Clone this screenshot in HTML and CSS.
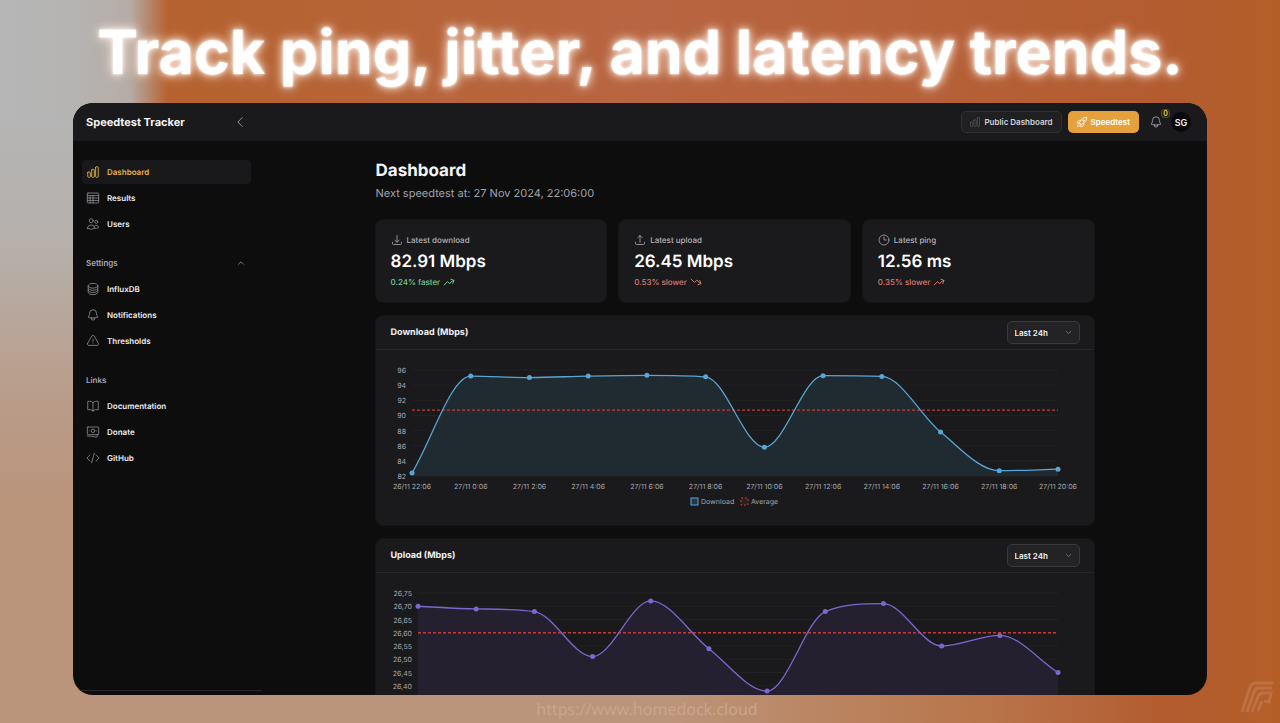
FILE: index.html
```html
<!DOCTYPE html>
<html lang="en">
<head>
<meta charset="utf-8">
<meta name="viewport" content="width=device-width, initial-scale=1">
<title>Speedtest Tracker</title>
<link rel="stylesheet" href="styles.css">
</head>
<body>
<svg class="sprite" aria-hidden="true">
  <symbol id="i-chart" viewBox="0 0 24 24"><path d="M3 13.1c0-.6.5-1.1 1.1-1.1h2.3c.6 0 1.1.5 1.1 1.1v6.8c0 .6-.5 1.1-1.1 1.1H4.100c-.6 0-1.100-.5-1.100-1.100v-6.800ZM9.750 8.600c0-.6.5-1.100 1.100-1.100h2.300c.6 0 1.100.5 1.100 1.100v11.300c0 .6-.5 1.100-1.100 1.100h-2.300c-.6 0-1.100-.5-1.100-1.100V8.600ZM16.500 4.100c0-.6.5-1.100 1.100-1.100h2.300c.6 0 1.100.5 1.100 1.100v15.800c0 .6-.5 1.100-1.100 1.100h-2.300c-.6 0-1.100-.5-1.100-1.100V4.100Z"/></symbol>
  <symbol id="i-table" viewBox="0 0 24 24"><rect x="2.200" y="3.500" width="19.600" height="17" rx="1.200"/><path d="M2.200 7.800h19.600M2.200 12h19.600M2.200 16.200h19.600M12 7.800v12.700M7 7.800v12.700"/></symbol>
  <symbol id="i-users" viewBox="0 0 24 24"><circle cx="9" cy="6.400" r="3.400"/><circle cx="17.600" cy="8.300" r="2.600"/><path d="M2.300 19.200a6.400 6.400 0 0 1 12.700 0v.1a12.300 12.300 0 0 1-12.700 0ZM15 19.300a9.300 9.300 0 0 0 6.600-.8 4.100 4.100 0 0 0-7.500-2.500"/></symbol>
  <symbol id="i-db" viewBox="0 0 24 24"><path d="M20.250 6.400c0 2.300-3.700 4.100-8.250 4.100S3.750 8.700 3.750 6.400m16.500 0c0-2.300-3.700-4.150-8.250-4.150S3.750 4.100 3.750 6.400m16.500 0v11.200c0 2.300-3.700 4.150-8.250 4.150s-8.250-1.850-8.250-4.150V6.400m16.500 3.750c0 2.300-3.700 4.100-8.250 4.100s-8.250-1.850-8.250-4.100m16.500 3.750c0 2.300-3.700 4.100-8.250 4.100s-8.250-1.850-8.250-4.100"/></symbol>
  <symbol id="i-bell" viewBox="0 0 24 24"><path d="M14.900 17.100a24 24 0 0 0 5.400-1.300A9 9 0 0 1 18 9.750V9A6 6 0 0 0 6 9v.75a9 9 0 0 1-2.300 6c1.700.6 3.500 1.100 5.400 1.300m5.800 0a24 24 0 0 1-5.800 0m5.800 0a3 3 0 1 1-5.800 0"/></symbol>
  <symbol id="i-warn" viewBox="0 0 24 24"><path d="M12 9v3.750M2.700 16.100c-.9 1.500.2 3.400 1.900 3.400h14.800c1.700 0 2.800-1.900 1.900-3.400L13.900 3.400c-.8-1.500-3-1.500-3.900 0L2.700 16.100ZM12 15.700v.1"/></symbol>
  <symbol id="i-book" viewBox="0 0 24 24"><path d="M12 6a9 9 0 0 0-6-2.200c-1.100 0-2.100.2-3 .5V18.500a9 9 0 0 1 9 1.800M12 6a9 9 0 0 1 6-2.200c1.100 0 2.100.2 3 .5V18.500a9 9 0 0 0-9 1.800M12 6v14.300"/></symbol>
  <symbol id="i-cash" viewBox="0 0 24 24"><rect x="2.250" y="3.500" width="19.500" height="13" rx="1"/><circle cx="12" cy="10" r="3"/><path d="M5.500 10h.1M18.400 10h.1M2.250 18.800c5.400 0 10.600.7 15.500 2 .8.200 1.500-.3 1.500-1.100V16.500"/></symbol>
  <symbol id="i-code" viewBox="0 0 24 24"><path d="M17.250 6.750 22.500 12l-5.250 5.250m-10.500 0L1.500 12l5.250-5.250m7.500-3-4.500 16.500"/></symbol>
  <symbol id="i-rocket" viewBox="0 0 24 24"><path d="M15.600 14.400a6 6 0 0 1-5.800 7.400v-4.800m5.800-2.600a15 15 0 0 0 6.100-12.100A15 15 0 0 0 9.600 8.400m6 6a15 15 0 0 1-5.800 2.600M9.600 8.400a6 6 0 0 0-7.400 5.800H7m2.600-5.800A15 15 0 0 0 7 14.200m2.800 2.800L7 14.200M4.800 16.600a4.500 4.500 0 0 0-1.700 4.300 4.500 4.500 0 0 0 4.300-1.700"/><circle cx="15" cy="9" r="1.500"/></symbol>
  <symbol id="i-down" viewBox="0 0 24 24"><path d="M3 16.500v2.250A2.250 2.250 0 0 0 5.250 21h13.500A2.250 2.250 0 0 0 21 18.750V16.500M16.500 12 12 16.500 7.500 12M12 16.500V3"/></symbol>
  <symbol id="i-up" viewBox="0 0 24 24"><path d="M3 16.500v2.250A2.250 2.250 0 0 0 5.250 21h13.500A2.250 2.250 0 0 0 21 18.750V16.500M7.500 7.500 12 3l4.500 4.500M12 3v13.500"/></symbol>
  <symbol id="i-clock" viewBox="0 0 24 24"><circle cx="12" cy="12" r="10"/><path d="M12 6v6h4.500"/></symbol>
  <symbol id="i-trend-up" viewBox="0 0 24 24"><path d="M2.250 18 9 11.250l4.300 4.300a12 12 0 0 1 5.800-5.500l2.750-1.250m-6-2.300 6 2.300-2.300 6"/></symbol>
  <symbol id="i-trend-down" viewBox="0 0 24 24"><path d="M2.250 6 9 12.750l4.300-4.300a12 12 0 0 1 5.800 5.500l2.750 1.250m-6 2.300 6-2.300-2.300-6"/></symbol>
  <symbol id="i-left" viewBox="0 0 24 24"><path d="M15.750 19.500 8.250 12l7.500-7.500"/></symbol>
  <symbol id="i-chev-up" viewBox="0 0 24 24"><path d="m4.500 15.750 7.500-7.500 7.500 7.500"/></symbol>
  <symbol id="i-chev-down" viewBox="0 0 24 24"><path d="m4.500 8.250 7.500 7.500 7.500-7.500"/></symbol>
</svg>

<div class="page">
  <h1 class="headline">Track ping, jitter, and latency trends.</h1>

  <div class="app">
    <header class="topbar">
      <span class="brand">Speedtest Tracker</span>
      <button class="plain collapse" type="button" aria-label="Collapse sidebar"><svg class="icon"><use href="#i-left"/></svg></button>
      <div class="actions">
        <button class="btn btn-dark" type="button"><svg class="icon"><use href="#i-chart"/></svg>Public Dashboard</button>
        <button class="btn btn-amber" type="button"><svg class="icon"><use href="#i-rocket"/></svg>Speedtest</button>
        <button class="plain alerts" type="button" aria-label="Notifications"><svg class="icon"><use href="#i-bell"/></svg><span class="badge">0</span></button>
        <button class="avatar" type="button">SG</button>
      </div>
    </header>

    <div class="body">
      <nav class="sidebar">
        <div class="group">
          <a class="item active" href="#"><svg class="icon"><use href="#i-chart"/></svg>Dashboard</a>
          <a class="item" href="#"><svg class="icon"><use href="#i-table"/></svg>Results</a>
          <a class="item" href="#"><svg class="icon"><use href="#i-users"/></svg>Users</a>
        </div>
        <div class="group">
          <button class="plain group-title" type="button">Settings<svg class="icon"><use href="#i-chev-up"/></svg></button>
          <a class="item" href="#"><svg class="icon"><use href="#i-db"/></svg>InfluxDB</a>
          <a class="item" href="#"><svg class="icon"><use href="#i-bell"/></svg>Notifications</a>
          <a class="item" href="#"><svg class="icon"><use href="#i-warn"/></svg>Thresholds</a>
        </div>
        <div class="group">
          <div class="group-title">Links</div>
          <a class="item" href="#"><svg class="icon"><use href="#i-book"/></svg>Documentation</a>
          <a class="item" href="#"><svg class="icon"><use href="#i-cash"/></svg>Donate</a>
          <a class="item" href="#"><svg class="icon"><use href="#i-code"/></svg>GitHub</a>
        </div>
        <hr class="side-rule">
      </nav>

      <main class="main">
        <div class="content">
          <div class="heading">
            <h2>Dashboard</h2>
            <p>Next speedtest at: 27 Nov 2024, 22:06:00</p>
          </div>

          <section class="stats">
            <article class="card stat">
              <div class="stat-label"><svg class="icon"><use href="#i-down"/></svg>Latest download</div>
              <div class="stat-value">82.91 Mbps</div>
              <div class="trend good">0.24% faster<svg class="icon"><use href="#i-trend-up"/></svg></div>
            </article>
            <article class="card stat">
              <div class="stat-label"><svg class="icon"><use href="#i-up"/></svg>Latest upload</div>
              <div class="stat-value">26.45 Mbps</div>
              <div class="trend bad">0.53% slower<svg class="icon"><use href="#i-trend-down"/></svg></div>
            </article>
            <article class="card stat">
              <div class="stat-label"><svg class="icon"><use href="#i-clock"/></svg>Latest ping</div>
              <div class="stat-value">12.56 ms</div>
              <div class="trend bad">0.35% slower<svg class="icon"><use href="#i-trend-up"/></svg></div>
            </article>
          </section>

          <section class="card">
            <div class="card-head">
              <h3>Download (Mbps)</h3>
              <div class="select"><select aria-label="Download period"><option>Last 24h</option></select><svg class="icon"><use href="#i-chev-down"/></svg></div>
            </div>
            <svg class="chart blue" id="download" viewBox="0 0 718 175" role="img" aria-label="Download speed"></svg>
          </section>

          <section class="card">
            <div class="card-head">
              <h3>Upload (Mbps)</h3>
              <div class="select"><select aria-label="Upload period"><option>Last 24h</option></select><svg class="icon"><use href="#i-chev-down"/></svg></div>
            </div>
            <svg class="chart violet" id="upload" viewBox="0 0 718 175" role="img" aria-label="Upload speed"></svg>
          </section>
        </div>
      </main>
    </div>
  </div>

  <footer class="footer">
    <a href="#">https://www.homedock.cloud</a>
    <svg class="mark" viewBox="0 0 34 32" aria-hidden="true"><path d="M2 31 10 6q2-4 6-4h17M7 31l7-20q1-4 5-4h13M12 31l6-15q1-4 5-4h8l-2 9-5-1M18 30l4-10"/></svg>
  </footer>
</div>
<script src="charts.js"></script>
</body>
</html>
```

FILE: styles.css
```css
* { box-sizing: border-box; }

body {
  margin: 0;
  font-family: Inter, "Liberation Sans", sans-serif;
  font-size: 8px;
  text-rendering: geometricPrecision;
  color: #f4f4f5;
  background:
    linear-gradient(90deg, #b5b6b6 0, #b5b4b3 74px, #b6aca6 130px, transparent 168px) 0 0 / 100% 120px no-repeat,
    linear-gradient(180deg, #b5b5b5 120px, #b6b0ac 240px, #b99c89 400px, #ba947b 500px) 0 0 / 74px 100% no-repeat,
    linear-gradient(90deg, #ba947b 0, #bb957b 52%, #b9764b 76%, transparent 90%) 0 100% / 100% 60px no-repeat,
    linear-gradient(90deg, #b5622f 12%, #b86541 50%, #b35c30 92%, #b45e27);
}

h1, h2, h3, p { margin: 0; }
button, select { font: inherit; color: inherit; }
a { color: inherit; text-decoration: none; }
.sprite { position: absolute; width: 0; height: 0; }

.icon {
  flex: none;
  width: 14px;
  height: 14px;
  fill: none;
  stroke: currentColor;
  stroke-width: 1.5;
  stroke-linecap: round;
  stroke-linejoin: round;
}

.page {
  display: flex;
  flex-direction: column;
  height: 100vh;
  padding: 0 73px;
}

.headline {
  flex: none;
  height: 103px;
  line-height: 104px;
  text-align: center;
  white-space: nowrap;
  font-size: 61px;
  font-weight: 700;
  color: #fff;
  text-shadow: 0 0 3px #fff, 0 0 8px #fff3ea, 0 0 14px rgba(255, 225, 205, .7);
}

.app {
  flex: 1;
  min-height: 0;
  display: flex;
  flex-direction: column;
  overflow: hidden;
  border-radius: 20px;
  background: #0d0d0e;
}

.topbar {
  flex: none;
  display: flex;
  align-items: center;
  height: 38px;
  padding: 0 16px 0 13px;
  background: #1a1a1c;
}
.brand { width: 147px; font-size: 11px; font-weight: 700; }
.actions { display: flex; align-items: center; margin-left: auto; }

.plain {
  display: flex;
  padding: 0;
  border: 0;
  background: none;
  color: #a1a1aa;
}

.btn {
  display: flex;
  align-items: center;
  gap: 3px;
  height: 22px;
  margin-right: 6px;
  padding: 0 8px 0 7px;
  border: 1px solid transparent;
  border-radius: 5px;
  font-weight: 600;
}
.btn .icon { width: 12px; height: 12px; }
.btn-dark { border-color: #303033; background: #202022; color: #d4d4d8; }
.btn-dark .icon { color: #56565b; }
.btn-amber { background: #e5a23c; color: #fff; }

.alerts { position: relative; margin: 0 8px 0 4px; }
.badge {
  position: absolute;
  left: 12px;
  top: -6px;
  width: 9px;
  height: 9px;
  border: 1px solid #5d4b1a;
  border-radius: 3px;
  background: #282417;
  color: #f2c93e;
  font-size: 7px;
  font-weight: 600;
  line-height: 7px;
  text-align: center;
}
.avatar {
  width: 20px;
  height: 20px;
  padding: 0;
  border: 0;
  border-radius: 50%;
  background: #09090b;
  font-size: 9px;
  font-weight: 600;
}

.body { flex: 1; min-height: 0; display: flex; }

.sidebar {
  flex: none;
  display: flex;
  flex-direction: column;
  gap: 15px;
  width: 189px;
  padding: 19px 0 4px;
}
.group { display: flex; flex-direction: column; gap: 2px; padding: 0 11px 0 9px; }
.item {
  display: flex;
  align-items: center;
  gap: 7px;
  height: 24px;
  padding: 0 4px;
  border-radius: 4px;
  font-weight: 600;
  color: #ececee;
}
.item .icon { color: #85858c; }
.item.active { background: #18181a; color: #e3b34b; }
.item.active .icon { color: #e3b34b; }
.group-title {
  display: flex;
  align-items: center;
  justify-content: space-between;
  height: 24px;
  padding: 0 6px 0 4px;
  font-weight: 600;
  color: #a8a8af;
}
.group-title .icon { width: 8px; height: 8px; stroke-width: 2; }
.side-rule { width: 100%; margin: auto 0 0; border: 0; border-top: 1px solid #29292b; }

.main { flex: 1; min-width: 0; padding: 18px 20px 0; }
.content {
  display: flex;
  flex-direction: column;
  gap: 14px;
  max-width: 718px;
  margin: 0 auto;
}
.heading { margin-bottom: 5px; }
h2 { font-size: 17px; line-height: 24px; font-weight: 700; }
.heading p { margin-top: 2px; font-size: 11px; line-height: 16px; color: #a1a1aa; }

.card {
  border-radius: 7px;
  background: #1a1a1c;
  box-shadow: 0 0 0 1px #151517;
}
.stats { display: grid; grid-template-columns: repeat(3, 1fr); gap: 13px; }
.stat { padding: 12px 15px 14px; }
.stat-label { display: flex; align-items: center; gap: 4px; height: 16px; font-weight: 500; color: #b4b4bb; }
.stat-label .icon { width: 12px; height: 12px; }
.stat-value { font-size: 17px; line-height: 28px; font-weight: 600; color: #fff; }
.trend { display: flex; align-items: center; gap: 3px; height: 12px; font-weight: 500; }
.trend .icon { width: 12px; height: 12px; stroke-width: 2; }
.good { color: #7bc791; }
.bad { color: #d87b74; }

.card-head {
  display: flex;
  align-items: center;
  justify-content: space-between;
  height: 34px;
  padding: 0 14px 0 15px;
  border-bottom: 1px solid #272729;
}
h3 { font-size: 9px; font-weight: 700; }
.select { position: relative; }
.select select {
  appearance: none;
  display: block;
  width: 73px;
  height: 23px;
  padding: 0 7px;
  border: 1px solid #3a3a3d;
  border-radius: 5px;
  background: #232325;
  font-weight: 600;
}
.select .icon { position: absolute; right: 8px; top: 8px; width: 7px; height: 7px; color: #a1a1aa; stroke-width: 2; pointer-events: none; }

.chart { display: block; width: 100%; height: auto; }
.blue { --line: #5aa5d6; --fill: #202a31; }
.violet { --line: #7c67cf; --fill: #242030; }
.chart text { font-size: 7px; fill: #a6a6ac; }
.grid { stroke: #222224; }
.area { fill: var(--fill); }
.curve { fill: none; stroke: var(--line); stroke-width: 1.300; }
.dot { fill: var(--line); }
.avg { stroke: #c93a35; stroke-width: 1.300; stroke-dasharray: 3 2; }
.key { fill: #21384a; stroke: var(--line); }
.key-avg { fill: #301d20; stroke: #c93a35; stroke-dasharray: 2 2; }

.footer {
  flex: none;
  display: flex;
  justify-content: center;
  height: 28px;
  font: 16px/28px "Noto Sans", sans-serif;
  color: #c9a58d;
  padding-left: 14px;
}
.mark {
  position: absolute;
  right: 6px;
  bottom: 10px;
  width: 34px;
  height: 32px;
  fill: none;
  stroke: #c57e55;
  stroke-width: 3;
  opacity: .6;
}
```

FILE: charts.js
```js
const times = ['26/11 22:06', '27/11 0:06', '27/11 2:06', '27/11 4:06', '27/11 6:06', '27/11 8:06',
  '27/11 10:06', '27/11 12:06', '27/11 14:06', '27/11 16:06', '27/11 18:06', '27/11 20:06'];

// Monotone cubic interpolation through equally spaced points.
function curve(pts) {
  const n = pts.length;
  const h = pts[1][0] - pts[0][0];
  const d = pts.slice(1).map((p, i) => (p[1] - pts[i][1]) / h);
  const m = pts.map((p, i) => {
    if (i === 0) return d[0];
    if (i === n - 1) return d[n - 2];
    return d[i - 1] * d[i] <= 0 ? 0 : (d[i - 1] + d[i]) / 2;
  });
  d.forEach((s, i) => {
    if (s === 0) { m[i] = m[i + 1] = 0; return; }
    const a = m[i] / s, b = m[i + 1] / s, q = a * a + b * b;
    if (q > 9) { const t = 3 / Math.sqrt(q); m[i] = t * a * s; m[i + 1] = t * b * s; }
  });
  let path = `M${pts[0]}`;
  for (let i = 1; i < n; i++) {
    const [x0, y0] = pts[i - 1], [x1, y1] = pts[i];
    path += `C${x0 + h / 3},${y0 + m[i - 1] * h / 3} ${x1 - h / 3},${y1 - m[i] * h / 3} ${x1},${y1}`;
  }
  return path;
}

function draw(id, { legend, left, min, max, step, digits, average, values, labels = [] }) {
  const right = 682, top = 20, bottom = 126;
  const y = v => bottom - (v - min) / (max - min) * (bottom - top);
  const x = i => left + i * (right - left) / (values.length - 1);
  const pts = values.map((v, i) => [x(i), y(v)]);
  let out = '';
  const count = Math.round((max - min) / step);
  for (let k = 0; k <= count; k++) {
    const v = min + k * step;
    out += `<line class="grid" x1="${left}" x2="${right}" y1="${y(v)}" y2="${y(v)}"/>`;
    out += `<text x="${left - 6}" y="${y(v) + 3}" text-anchor="end">${v.toFixed(digits).replace('.', ',')}</text>`;
  }
  const path = curve(pts);
  out += `<path class="area" d="${path}V${bottom}H${left}Z"/>`;
  out += `<line class="avg" x1="${left}" x2="${right}" y1="${y(average)}" y2="${y(average)}"/>`;
  out += `<path class="curve" d="${path}"/>`;
  pts.forEach(([px, py]) => { out += `<circle class="dot" cx="${px}" cy="${py}" r="2.500"/>`; });
  labels.forEach((t, i) => { out += `<text x="${x(i)}" y="139" text-anchor="middle">${t}</text>`; });
  if (legend) {
    out += `<rect class="key" x="315" y="148" width="7" height="7"/><text x="325" y="154">${legend}</text>`;
    out += `<rect class="key-avg" x="365" y="148" width="7" height="7"/><text x="375" y="154">Average</text>`;
  }
  document.getElementById(id).innerHTML = out;
}

draw('download', {
  legend: 'Download', labels: times, left: 36, min: 82, max: 96, step: 2, digits: 0, average: 90.7,
  values: [82.4, 95.2, 95, 95.2, 95.3, 95.1, 85.8, 95.25, 95.15, 87.8, 82.7, 82.9]
});
draw('upload', {
  left: 42, min: 26.35, max: 26.75, step: 0.05, digits: 2, average: 26.6,
  values: [26.7, 26.69, 26.68, 26.51, 26.72, 26.54, 26.38, 26.68, 26.71, 26.55, 26.59, 26.45]
});
```
